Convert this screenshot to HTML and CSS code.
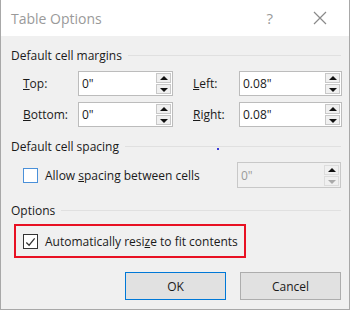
FILE: index.html
```html
<!DOCTYPE html>
<html lang="en">
<head>
    <meta charset="UTF-8">
    <title>Table Options</title>
    <link rel="stylesheet" href="styles.css">
</head>
<body>

    <div class="dialog">
        <!-- Title bar -->
        <div class="titlebar">
            <span class="title">Table Options</span>
            <span class="help">?</span>
            <svg class="close" width="14" height="14" viewBox="0 0 14 14">
                <path d="M1 1 L13 13 M13 1 L1 13" stroke="#8a8a8a" stroke-width="1.2" fill="none"/>
            </svg>
        </div>

        <div class="content">
            <!-- Margins -->
            <div class="group-title"><span>Default cell margins</span></div>
            <div class="margins">
                <label class="lbl"><u>T</u>op:</label>
                <div class="spin">
                    <span class="val">0"</span>
                    <div class="arrows"><b class="up"></b><b class="down"></b></div>
                </div>
                <label class="lbl lbl-right"><u>L</u>eft:</label>
                <div class="spin">
                    <span class="val">0.08"</span>
                    <div class="arrows"><b class="up"></b><b class="down"></b></div>
                </div>

                <label class="lbl"><u>B</u>ottom:</label>
                <div class="spin">
                    <span class="val">0"</span>
                    <div class="arrows"><b class="up"></b><b class="down"></b></div>
                </div>
                <label class="lbl lbl-right"><u>R</u>ight:</label>
                <div class="spin">
                    <span class="val">0.08"</span>
                    <div class="arrows"><b class="up"></b><b class="down"></b></div>
                </div>
            </div>

            <!-- Spacing -->
            <div class="group-title"><span>Default cell spacing</span><i class="dot"></i></div>
            <div class="spacing">
                <span class="check"></span>
                <span class="check-text">Allow <u>s</u>pacing between cells</span>
                <div class="spin spin-disabled">
                    <span class="val">0"</span>
                    <div class="arrows"><b class="up"></b><b class="down"></b></div>
                </div>
            </div>

            <!-- Options -->
            <div class="group-title"><span>Options</span></div>
            <div class="highlight">
                <span class="check checked">
                    <svg width="14" height="14" viewBox="0 0 14 14">
                        <path d="M2.5 7.5 L5.5 10.5 L11.5 3" stroke="#333" stroke-width="1.3" fill="none"/>
                    </svg>
                </span>
                <span class="check-text">Automatically resi<u>z</u>e to fit contents</span>
            </div>

            <div class="buttons">
                <button class="btn btn-default">OK</button>
                <button class="btn">Cancel</button>
            </div>
        </div>
    </div>

</body>
</html>
```

FILE: styles.css
```css
body {
    margin: 0;
    font-family: 'Open Sans', 'Noto Sans', sans-serif;
    font-size: 12px;
    color: #1a1a1a;
    background-color: #fff;
}
.dialog {
    width: 348px;
    height: 309px;
    border: 1px solid #a8a8a8;
    border-top: none;
    background-color: #f0f0f0;
}
.titlebar {
    height: 36px;
    background-color: #fff;
    display: flex;
    align-items: center;
    padding-left: 10px;
}
.title {
    font-size: 14px;
    color: #9a9a9a;
    flex: 1;
}
.help {
    font-size: 15px;
    color: #9a9a9a;
    margin-right: 40px;
}
.close {
    margin-right: 22px;
}
.content {
    padding: 9px 8px 0 10px;
}
.group-title {
    display: flex;
    align-items: center;
    height: 20px;
    position: relative;
}
.group-title::after {
    content: '';
    flex: 1;
    height: 1px;
    background-color: #e0e0e0;
    margin-left: 6px;
}
.dot {
    position: absolute;
    left: 206px;
    top: 12px;
    width: 2px;
    height: 2px;
    background-color: #3a3ad8;
}
.margins {
    display: grid;
    grid-template-columns: 55px 95px 66px 103px;
    row-gap: 6px;
    align-items: center;
    padding: 6px 0 0 12px;
    margin-bottom: 9px;
}
.lbl-right {
    padding-left: 20px;
}
.spin {
    height: 25px;
    border: 1px solid #bcbcbc;
    background-color: #fff;
    display: flex;
    align-items: center;
    box-sizing: border-box;
}
.val {
    flex: 1;
    padding-left: 3px;
}
.arrows {
    width: 15px;
    height: 21px;
    margin-right: 1px;
    display: flex;
    flex-direction: column;
    gap: 1px;
}
.arrows b {
    flex: 1;
    border: 1px solid #c8c8c8;
    background-color: #f0f0f0;
    position: relative;
}
.arrows b::after {
    content: '';
    position: absolute;
    left: 3px;
    border-left: 4px solid transparent;
    border-right: 4px solid transparent;
}
.up::after {
    top: 2px;
    border-bottom: 4px solid #111;
}
.down::after {
    top: 3px;
    border-top: 4px solid #111;
}
.spacing {
    display: flex;
    align-items: center;
    padding: 6px 0 0 12px;
    margin-bottom: 12px;
}
.check {
    width: 13px;
    height: 13px;
    border: 1px solid #333;
    background-color: #fff;
    display: inline-flex;
    margin-right: 7px;
}
.spacing .check {
    border-color: #4a90d9;
}
.spin-disabled {
    margin-left: auto;
    width: 104px;
    height: 26px;
    background-color: #f0f0f0;
    border-color: #c8c8c8;
    color: #9a9a9a;
}
.spin-disabled .arrows b {
    border-color: #dcdcdc;
}
.spin-disabled .down::after {
    border-top-color: #aaa;
}
.highlight {
    display: flex;
    align-items: center;
    width: 221px;
    height: 30px;
    margin: 4px 0 0 3px;
    border: 2px solid #e81123;
    padding-left: 7px;
}
.buttons {
    display: flex;
    justify-content: flex-end;
    gap: 14px;
    margin-top: 14px;
}
.btn {
    width: 101px;
    height: 28px;
    font-family: inherit;
    font-size: 12px;
    color: #1a1a1a;
    background-color: #e1e1e1;
    border: 1px solid #adadad;
    padding: 0;
}
.btn-default {
    border-color: #0078d7;
}
```
